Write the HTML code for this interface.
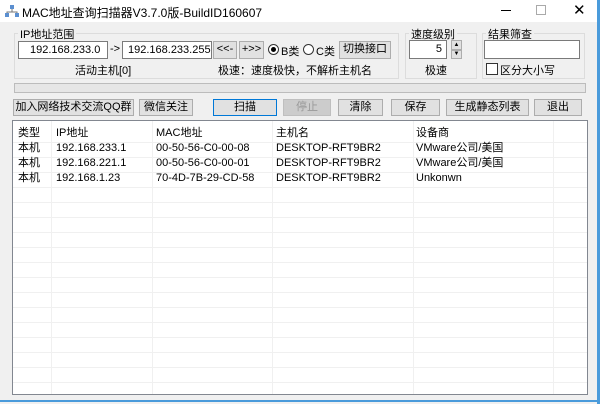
<!DOCTYPE html><html><head><meta charset="utf-8"><style>
*{box-sizing:border-box;margin:0;padding:0}
body{width:600px;height:404px;background:#f0f0f0;font-family:"Liberation Sans","Noto Sans CJK SC",sans-serif;font-size:11px;color:#000;position:relative;overflow:hidden}
.a{position:absolute;white-space:nowrap}
.tb{left:0;top:0;width:600px;height:22px;background:#fff}
.inp{background:#fff;border:1px solid #7a7a7a;line-height:16px}
.btn{background:#e1e1e1;border:1px solid #adadad;text-align:center;line-height:15px}
.grp{border:1px solid #dcdcdc}
.lbl{background:#f0f0f0;padding:0 2px}
.vl{position:absolute;top:0;bottom:0;width:1px;background:#f0f0f0}
.hl{position:absolute;left:0;right:0;height:1px;background:#f0f0f0}
</style></head><body>
<div class="a tb"></div>
<svg class="a" style="left:5px;top:5px" width="14" height="13"><rect x="5" y="0" width="4" height="4" fill="#5b8fd0"/><rect x="0" y="8" width="4" height="4" fill="#5b8fd0"/><rect x="10" y="8" width="4" height="4" fill="#5b8fd0"/><path d="M7 4V7M2 8V7H12V8" stroke="#777" fill="none"/></svg>
<div class="a" style="left:22px;top:4px;font-size:12px">MAC地址查询扫描器V3.7.0版-BuildID160607</div>
<div class="a" style="left:501px;top:10px;width:10px;height:1px;background:#000"></div>
<div class="a" style="left:536px;top:5px;width:10px;height:10px;border:1px solid #aaa"></div>
<div class="a" style="left:573px;top:1px;font-size:15px">✕</div>
<div class="a" style="left:597px;top:0;width:3px;height:404px;background:#4a9bdb"></div>
<div class="a" style="left:0;top:400px;width:600px;height:2px;background:#4a9bdb"></div>

<div class="a grp" style="left:14px;top:33px;width:385px;height:46px"></div>
<div class="a lbl" style="left:18px;top:26px">IP地址范围</div>
<div class="a inp" style="left:18px;top:41px;width:90px;height:18px;padding-left:11px">192.168.233.0</div>
<div class="a" style="left:110px;top:43px">-&gt;</div>
<div class="a inp" style="left:122px;top:41px;width:90px;height:18px;padding-left:5px">192.168.233.255</div>
<div class="a btn" style="left:213px;top:41px;width:24px;height:18px">&lt;&lt;-</div>
<div class="a btn" style="left:239px;top:41px;width:25px;height:18px">+&gt;&gt;</div>
<div class="a" style="left:268px;top:44px;width:11px;height:11px;border:1px solid #333;border-radius:50%;background:#fff"><div style="margin:2px;width:5px;height:5px;border-radius:50%;background:#000"></div></div>
<div class="a" style="left:281px;top:43px">B类</div>
<div class="a" style="left:303px;top:44px;width:11px;height:11px;border:1px solid #333;border-radius:50%;background:#fff"></div>
<div class="a" style="left:316px;top:43px">C类</div>
<div class="a btn" style="left:339px;top:41px;width:52px;height:18px">切换接口</div>
<div class="a" style="left:75px;top:62px">活动主机[0]</div>
<div class="a" style="left:218px;top:62px">极速：速度极快，不解析主机名</div>

<div class="a grp" style="left:405px;top:33px;width:72px;height:46px"></div>
<div class="a lbl" style="left:409px;top:26px">速度级别</div>
<div class="a inp" style="left:409px;top:40px;width:38px;height:19px;text-align:right;padding-right:4px">5</div>
<div class="a btn" style="left:451px;top:40px;width:11px;height:10px;font-size:6px;line-height:8px">▲</div>
<div class="a btn" style="left:451px;top:50px;width:11px;height:9px;font-size:6px;line-height:7px">▼</div>
<div class="a" style="left:425px;top:62px">极速</div>

<div class="a grp" style="left:482px;top:33px;width:103px;height:46px"></div>
<div class="a lbl" style="left:486px;top:26px">结果筛查</div>
<div class="a inp" style="left:484px;top:40px;width:96px;height:19px"></div>
<div class="a" style="left:486px;top:63px;width:12px;height:12px;border:1px solid #333;background:#fff"></div>
<div class="a" style="left:500px;top:62px">区分大小写</div>

<div class="a" style="left:14px;top:83px;width:572px;height:10px;background:#e6e6e6;border:1px solid #bcbcbc"></div>

<div class="a btn" style="left:13px;top:99px;width:121px;height:17px">加入网络技术交流QQ群</div>
<div class="a btn" style="left:139px;top:99px;width:54px;height:17px">微信关注</div>
<div class="a btn" style="left:213px;top:99px;width:64px;height:17px;border:1px solid #0078d7">扫描</div>
<div class="a btn" style="left:283px;top:99px;width:48px;height:17px;background:#ccc;border-color:#bfbfbf;color:#999">停止</div>
<div class="a btn" style="left:338px;top:99px;width:45px;height:17px">清除</div>
<div class="a btn" style="left:391px;top:99px;width:49px;height:17px">保存</div>
<div class="a btn" style="left:446px;top:99px;width:83px;height:17px">生成静态列表</div>
<div class="a btn" style="left:534px;top:99px;width:48px;height:17px">退出</div>

<div class="a" style="left:12px;top:120px;width:576px;height:275px;background:#fff;border:1px solid #828790;overflow:hidden">
<div class="vl" style="left:38px"></div><div class="vl" style="left:139px"></div><div class="vl" style="left:259px"></div><div class="vl" style="left:400px"></div><div class="vl" style="left:540px"></div>
<div class="hl" style="top:21px"></div><div class="hl" style="top:36px"></div><div class="hl" style="top:51px"></div><div class="hl" style="top:66px"></div><div class="hl" style="top:81px"></div><div class="hl" style="top:96px"></div><div class="hl" style="top:111px"></div><div class="hl" style="top:126px"></div><div class="hl" style="top:141px"></div><div class="hl" style="top:156px"></div><div class="hl" style="top:171px"></div><div class="hl" style="top:186px"></div><div class="hl" style="top:201px"></div><div class="hl" style="top:216px"></div><div class="hl" style="top:231px"></div><div class="hl" style="top:246px"></div><div class="hl" style="top:261px"></div>
</div>
<div class="a" style="left:18px;top:126px;line-height:15px">类型<br>本机<br>本机<br>本机</div>
<div class="a" style="left:56px;top:126px;line-height:15px">IP地址<br>192.168.233.1<br>192.168.221.1<br>192.168.1.23</div>
<div class="a" style="left:156px;top:126px;line-height:15px">MAC地址<br>00-50-56-C0-00-08<br>00-50-56-C0-00-01<br>70-4D-7B-29-CD-58</div>
<div class="a" style="left:276px;top:126px;line-height:15px">主机名<br>DESKTOP-RFT9BR2<br>DESKTOP-RFT9BR2<br>DESKTOP-RFT9BR2</div>
<div class="a" style="left:416px;top:126px;line-height:15px">设备商<br>VMware公司/美国<br>VMware公司/美国<br>Unkonwn</div>
</body></html>
